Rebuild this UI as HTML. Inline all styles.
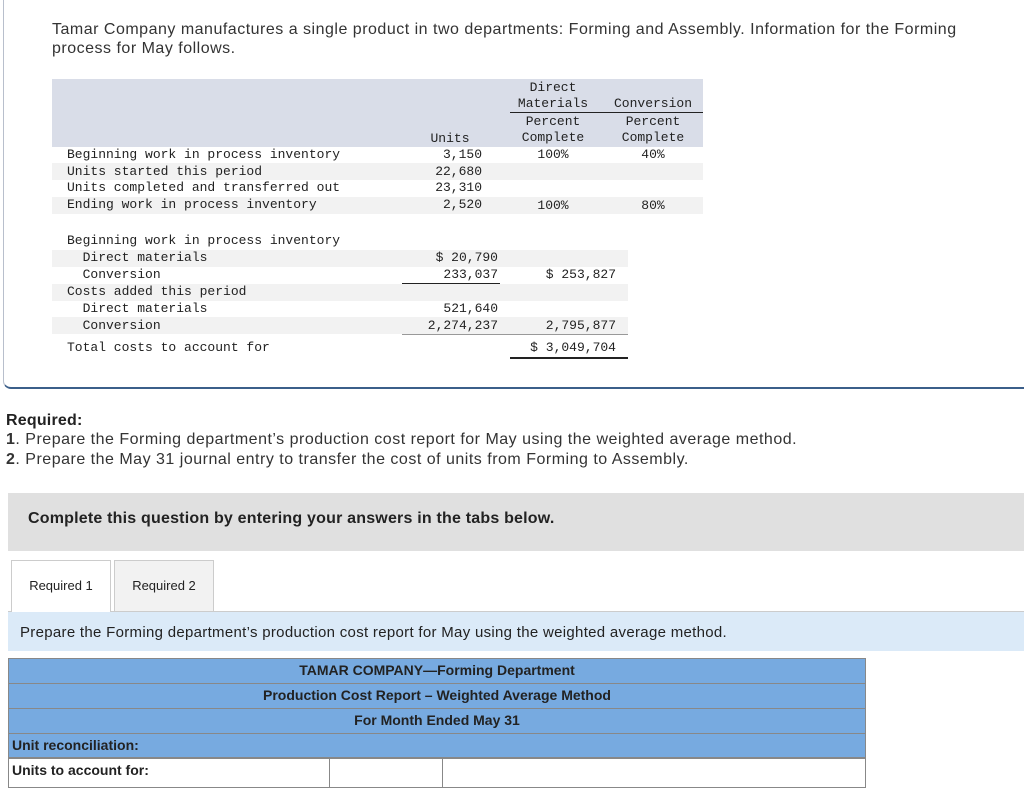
<!DOCTYPE html>
<html><head><meta charset="utf-8"><style>
*{margin:0;padding:0;box-sizing:border-box}
body{width:1024px;height:784px;background:#fff;position:relative;overflow:hidden;font-family:"Liberation Sans",sans-serif;color:#333}
.a{position:absolute;white-space:nowrap}
.m{font-family:"Liberation Mono",monospace;font-size:13px;color:#222;line-height:16px}
.r{text-align:right}
.c{text-align:center}
.s{font-size:16px;line-height:19px;letter-spacing:0.5px}
</style></head><body>
<div class="a" style="left:3px;top:-10px;width:1030px;height:399px;border-left:1px solid #b8bfcc;border-bottom:2px solid #3b5f8a;border-radius:0 0 0 8px"></div>
<div class="a s" style="left:52px;top:20px">Tamar Company manufactures a single product in two departments: Forming and Assembly. Information for the Forming</div>
<div class="a s" style="left:52px;top:39px">process for May follows.</div>

<div class="a" style="left:52px;top:79px;width:651px;height:68px;background:#d9dde8"></div>
<div class="a" style="left:52px;top:163px;width:651px;height:17px;background:#f2f2f2"></div>
<div class="a" style="left:52px;top:197px;width:651px;height:17px;background:#f2f2f2"></div>
<div class="a" style="left:510px;top:112px;width:193px;height:1px;background:#222"></div>
<div class="a m c" style="left:510px;top:80px;width:86px">Direct<br>Materials</div>
<div class="a m c" style="left:603px;top:96px;width:100px">Conversion</div>
<div class="a m c" style="left:510px;top:114px;width:86px">Percent<br>Complete</div>
<div class="a m c" style="left:603px;top:114px;width:100px">Percent<br>Complete</div>
<div class="a m c" style="left:420px;top:131px;width:60px">Units</div>
<div class="a m" style="left:67px;top:147px;line-height:16.7px">Beginning work in process inventory<br>Units started this period<br>Units completed and transferred out<br>Ending work in process inventory</div>
<div class="a m r" style="left:400px;top:147px;width:82px;line-height:16.7px">3,150<br>22,680<br>23,310<br>2,520</div>
<div class="a m c" style="left:510px;top:147px;width:86px">100%</div>
<div class="a m c" style="left:603px;top:147px;width:100px">40%</div>
<div class="a m c" style="left:510px;top:198px;width:86px">100%</div>
<div class="a m c" style="left:603px;top:198px;width:100px">80%</div>

<div class="a" style="left:52px;top:250px;width:576px;height:17px;background:#f2f2f2"></div>
<div class="a" style="left:52px;top:284px;width:576px;height:17px;background:#f2f2f2"></div>
<div class="a" style="left:52px;top:317px;width:576px;height:17px;background:#f2f2f2"></div>
<div class="a m" style="left:67px;top:233px;line-height:16.9px">Beginning work in process inventory<br>&nbsp;&nbsp;Direct materials<br>&nbsp;&nbsp;Conversion<br>Costs added this period<br>&nbsp;&nbsp;Direct materials<br>&nbsp;&nbsp;Conversion</div>
<div class="a m" style="left:67px;top:340px">Total costs to account for</div>
<div class="a m r" style="left:400px;top:250px;width:98px">$ 20,790</div>
<div class="a m r" style="left:400px;top:267px;width:98px">233,037</div>
<div class="a" style="left:402px;top:283px;width:98px;height:1px;background:#222"></div>
<div class="a m r" style="left:510px;top:267px;width:106px">$ 253,827</div>
<div class="a m r" style="left:400px;top:301px;width:98px">521,640</div>
<div class="a m r" style="left:400px;top:318px;width:98px">2,274,237</div>
<div class="a m r" style="left:510px;top:318px;width:106px">2,795,877</div>
<div class="a" style="left:402px;top:334px;width:226px;height:1px;background:#999"></div>
<div class="a m r" style="left:510px;top:340px;width:106px">$ 3,049,704</div>
<div class="a" style="left:510px;top:357px;width:118px;height:2px;background:#222"></div>

<div class="a s" style="left:6px;top:411px;font-weight:bold;color:#222;letter-spacing:0.2px">Required:</div>
<div class="a s" style="left:6px;top:430px"><b>1</b>. Prepare the Forming department’s production cost report for May using the weighted average method.</div>
<div class="a s" style="left:6px;top:450px"><b>2</b>. Prepare the May 31 journal entry to transfer the cost of units from Forming to Assembly.</div>

<div class="a" style="left:8px;top:493px;width:1016px;height:58px;background:#e0e0e0"></div>
<div class="a s" style="left:28px;top:509px;font-weight:bold;color:#222;letter-spacing:0.2px">Complete this question by entering your answers in the tabs below.</div>

<div class="a" style="left:8px;top:611px;width:1016px;height:1px;background:#ccc"></div>
<div class="a" style="left:11px;top:560px;width:100px;height:52px;background:#fff;border:1px solid #ccc;border-bottom:none"></div>
<div class="a" style="left:114px;top:560px;width:100px;height:51px;background:#f2f2f2;border:1px solid #ccc;border-bottom:none"></div>
<div class="a c" style="left:11px;top:578px;width:100px;font-size:13px;color:#222">Required 1</div>
<div class="a c" style="left:114px;top:578px;width:100px;font-size:13px;color:#222">Required 2</div>

<div class="a" style="left:8px;top:612px;width:1016px;height:39px;background:#dbeaf8"></div>
<div class="a" style="left:20px;top:623px;color:#222;font-size:15px;line-height:19px;letter-spacing:0.3px">Prepare the Forming department’s production cost report for May using the weighted average method.</div>

<div class="a" style="left:8px;top:658px;width:858px;height:100px;background:#77aae0;border:1px solid #888"></div>
<div class="a" style="left:8px;top:683px;width:858px;height:1px;background:#888"></div>
<div class="a" style="left:8px;top:708px;width:858px;height:1px;background:#888"></div>
<div class="a" style="left:8px;top:733px;width:858px;height:1px;background:#888"></div>
<div class="a c" style="left:8px;top:662px;width:858px;font-size:14px;font-weight:bold;color:#222">TAMAR COMPANY—Forming Department</div>
<div class="a c" style="left:8px;top:687px;width:858px;font-size:14px;font-weight:bold;color:#222">Production Cost Report – Weighted Average Method</div>
<div class="a c" style="left:8px;top:712px;width:858px;font-size:14px;font-weight:bold;color:#222">For Month Ended May 31</div>
<div class="a" style="left:12px;top:737px;font-size:14px;font-weight:bold;color:#222">Unit reconciliation:</div>
<div class="a" style="left:8px;top:758px;width:858px;height:30px;border:1px solid #888;background:#fff"></div>
<div class="a" style="left:329px;top:758px;width:114px;height:30px;border-left:1px solid #888;border-right:1px solid #888"></div>
<div class="a" style="left:12px;top:762px;font-size:14px;font-weight:bold;color:#222">Units to account for:</div>
</body></html>
